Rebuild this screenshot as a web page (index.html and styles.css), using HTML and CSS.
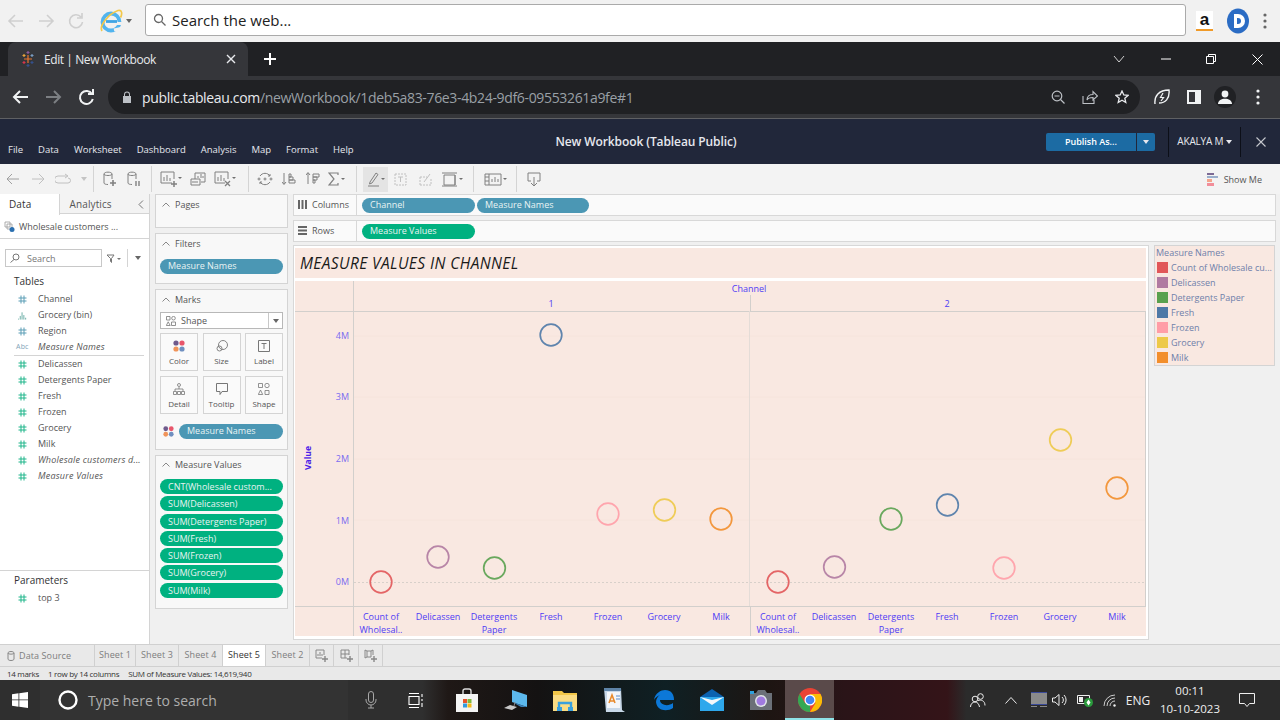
FILE: index.html
```html
<!DOCTYPE html>
<html lang="en">
<head>
    <meta charset="UTF-8">
    <meta name="viewport" content="width=device-width, initial-scale=1.0">
    <title>Edit | New Workbook</title>
    <link rel="stylesheet" href="styles.css">
</head>
<body>
    <svg class="defs" width="0" height="0">
        <symbol id="hash" viewBox="0 0 9 9">
            <path d="M3 .5v8M6 .5v8M.5 3h8M.5 6h8" fill="none" stroke="currentColor" stroke-width="1"/>
        </symbol>
        <symbol id="colors" viewBox="0 0 12 12">
            <circle cx="3" cy="3" r="2.6" fill="#6f5a8c"/><circle cx="9" cy="3" r="2.6" fill="#e8566b"/>
            <circle cx="3" cy="9" r="2.6" fill="#f0945a"/><circle cx="9" cy="9" r="2.6" fill="#6f8fc0"/>
        </symbol>
    </svg>

    <!-- search bar on top of the browser -->
    <div class="top-bar">
        <svg class="nav-faded" width="90" height="20" viewBox="0 0 90 20" fill="none" stroke="#cfcfcf" stroke-width="1.6">
            <path d="M23 10H9M15 4l-6 6 6 6M39 10h14M47 4l6 6-6 6M81 6a6.5 6.5 0 1 0 1.5 5M82 2v5h-5"/>
        </svg>
        <svg class="ie-logo" width="24" height="26" viewBox="0 0 24 26" fill="none">
            <circle cx="12" cy="14" r="8.500" stroke="#52b4ee" stroke-width="3.800"/>
            <path d="M7 13.500h11" stroke="#3fa4e4" stroke-width="2.800"/>
            <path d="M18 15.500h5M15 22l7-1.500" stroke="#f1f1f1" stroke-width="3.200"/>
            <path d="M3 23C0 18 9 6 19 2.500c4-1 4.500 3 2.500 7" stroke="#f2c84a" stroke-width="1.700"/>
        </svg>
        <span class="caret-dark"></span>
        <div class="web-search">
            <svg width="14" height="14" viewBox="0 0 14 14" fill="none" stroke="#666" stroke-width="1.3"><circle cx="5.5" cy="5.5" r="4"/><path d="M8.5 8.5l4 4"/></svg>
            <span>Search the web...</span>
        </div>
        <span class="amazon">a</span>
        <svg class="d-logo" width="24" height="26" viewBox="0 0 24 26">
            <ellipse cx="12" cy="13" rx="11" ry="12.500" fill="#2b6cc4"/>
            <path d="M8 6h4a7 7 0 0 1 0 14H8z" fill="#fff"/><path d="M11 10h1a3 3 0 0 1 0 6h-1z" fill="#2b6cc4"/>
        </svg>
        <svg width="4" height="16" viewBox="0 0 4 16" fill="#666"><circle cx="2" cy="2" r="1.6"/><circle cx="2" cy="8" r="1.6"/><circle cx="2" cy="14" r="1.6"/></svg>
    </div>

    <!-- chrome tabs -->
    <div class="tab-strip">
        <div class="chrome-tab">
            <svg width="14" height="16" viewBox="0 0 14 16" fill="none" stroke-width="1.2">
                <path d="M7 4v8M3 8h8" stroke="#e8762c"/><path d="M3 3v3M1.500 4.500h3" stroke="#e8a33c"/><path d="M11 3v3M9.500 4.500h3" stroke="#7a9cc0"/>
                <path d="M3 10v3M1.500 11.500h3" stroke="#d8344a"/><path d="M11 10v3M9.500 11.500h3" stroke="#34508c"/><path d="M7 0v3M5.500 1.500h3" stroke="#8a5a9c"/><path d="M7 13v3M5.500 14.500h3" stroke="#34508c"/>
            </svg>
            <span class="tab-title">Edit | New Workbook</span>
            <svg class="tab-close" width="10" height="10" viewBox="0 0 10 10" stroke="#e8eaed" stroke-width="1.4"><path d="M1 1l8 8M9 1l-8 8"/></svg>
        </div>
        <svg class="new-tab" width="12" height="12" viewBox="0 0 12 12" stroke="#fff" stroke-width="2"><path d="M6 0v12M0 6h12"/></svg>
        <div class="window-btns">
            <svg width="12" height="8" viewBox="0 0 12 8" fill="none" stroke="#d0d0d0"><path d="M1 1l5 6 5-6"/></svg>
            <svg width="10" height="2" viewBox="0 0 10 2" stroke="#fff"><path d="M0 1h10"/></svg>
            <svg width="10" height="10" viewBox="0 0 10 10" fill="none" stroke="#fff"><path d="M.5 2.500h7v7h-7zM2.500 2.500v-2h7v7h-2"/></svg>
            <svg width="11" height="11" viewBox="0 0 11 11" stroke="#fff"><path d="M.5.5l10 10M10.500.5l-10 10"/></svg>
        </div>
    </div>

    <!-- chrome address row -->
    <div class="address-row">
        <svg class="chrome-nav" width="92" height="18" viewBox="0 0 92 18" fill="none" stroke-width="2">
            <path d="M22 9H8M14 3L8 9l6 6" stroke="#f1f3f4"/>
            <path d="M40 9h14M48 3l6 6-6 6" stroke="#7c7f83"/>
            <path d="M90 6a6.500 6.500 0 1 0 .8 5M91 1v5h-5" stroke="#f1f3f4" transform="translate(-4 0)"/>
        </svg>
        <div class="omnibox">
            <svg width="10" height="12" viewBox="0 0 10 12" fill="#bdc1c6"><path d="M2 5V3.500a3 3 0 0 1 6 0V5h1v7H1V5zM3 5h4V3.500a2 2 0 0 0-4 0z"/></svg>
            <span class="url"><b>public.tableau.com</b>/newWorkbook/1deb5a83-76e3-4b24-9df6-09553261a9fe#1</span>
            <div class="omni-icons">
                <svg width="14" height="14" viewBox="0 0 14 14" fill="none" stroke="#bdc1c6" stroke-width="1.2"><circle cx="6" cy="6" r="4.800"/><path d="M9.500 9.500l4 4M3.500 6h5"/></svg>
                <svg width="16" height="14" viewBox="0 0 16 14" fill="none" stroke="#bdc1c6" stroke-width="1.1"><path d="M1 6v7.500h11V10M5 10c0-4 3-5.500 6-5.500V1.500l4.500 4.500-4.500 4V7.500C8 7.500 6 8 5 10z"/></svg>
                <svg width="14" height="14" viewBox="0 0 14 14" fill="none" stroke="#e8eaed" stroke-width="1.3"><path d="M7 1l1.800 4 4.200.4-3.200 2.800 1 4.300L7 10.300 3.200 12.500l1-4.300L1 5.400 5.200 5z"/></svg>
            </div>
        </div>
        <div class="chrome-actions">
            <svg width="16" height="16" viewBox="0 0 16 16" fill="none" stroke="#f1f3f4" stroke-width="1.400"><path d="M1 15C0 7 5 1 15 1c1 9-4 13-10 13"/><path d="M9 4L6.500 8.500h3L7 12" stroke-width="1.200"/></svg>
            <svg class="panel-ic" width="14" height="14" viewBox="0 0 14 14"><path d="M0 0h14v14H0z" fill="#f1f3f4"/><path d="M2 2h6v10H2z" fill="#35363a"/></svg>
            <span class="avatar"><svg width="14" height="14" viewBox="0 0 14 14" fill="#f1f3f4"><circle cx="7" cy="4" r="3.400"/><path d="M0 14c0-7 14-7 14 0z"/></svg></span>
            <svg class="dots-ic" width="4" height="16" viewBox="0 0 4 16" fill="#f1f3f4"><circle cx="2" cy="2" r="1.600"/><circle cx="2" cy="8" r="1.600"/><circle cx="2" cy="14" r="1.600"/></svg>
        </div>
    </div>

    <!-- tableau header -->
    <header class="tb-header">
        <nav class="menu">
            <span>File</span><span>Data</span><span>Worksheet</span><span>Dashboard</span><span>Analysis</span><span>Map</span><span>Format</span><span>Help</span>
        </nav>
        <div class="wb-title">New Workbook (Tableau Public)</div>
        <div class="header-right">
            <div class="publish"><span class="publish-main">Publish As...</span><span class="publish-arrow"><i class="caret-white"></i></span></div>
            <div class="user">AKALYA M <i class="caret-white"></i></div>
            <svg class="header-close" width="10" height="10" viewBox="0 0 10 10" stroke="#c6c8ce" stroke-width="1.1"><path d="M.5.500l9 9M9.500.500l-9 9"/></svg>
        </div>
    </header>

    <!-- tableau toolbar -->
    <div class="toolbar">
        <div class="tb-group g1">
            <span class="tb-btn"><svg width="14" height="12" viewBox="0 0 14 12" class="ic soft"><path d="M13 6H1M6 1L1 6l5 5"/></svg></span>
            <span class="tb-btn"><svg width="14" height="12" viewBox="0 0 14 12" class="ic off"><path d="M1 6h12M8 1l5 5-5 5"/></svg></span>
            <span class="tb-btn"><svg width="16" height="12" viewBox="0 0 16 12" class="ic off"><path d="M12 3H3a2.500 2.500 0 0 0 0 7h10a2 2 0 0 0 0-5M10 1l3 2-3 2"/></svg></span>
            <i class="caret-grey off"></i>
        </div>
        <div class="tb-group g2">
            <span class="tb-btn"><svg width="16" height="16" viewBox="0 0 16 16" class="ic"><path d="M2 3c0-2.500 8-2.500 8 0v5M2 3c0 2 8 2 8 0M2 3v9c0 1 2 1.500 4 1.500"/><path d="M11 9v6M8 12h6" stroke-width="1.600"/></svg></span>
            <span class="tb-btn"><svg width="16" height="16" viewBox="0 0 16 16" class="ic"><path d="M2 3c0-2.500 8-2.500 8 0v5M2 3c0 2 8 2 8 0M2 3v9c0 1 2 1.500 4 1.500"/><path d="M10 10v5M13 10v5" stroke-width="1.400"/></svg></span>
        </div>
        <div class="tb-group g3">
            <span class="tb-btn"><svg width="22" height="16" viewBox="0 0 22 16" class="ic"><path d="M12 12H1V1h13v7M4 10V6M7 10V4M10 10V7"/><path d="M14 10v6M11 13h6" stroke-width="1.500"/><path d="M18 6h4l-2 2z" class="solid"/></svg></span>
            <span class="tb-btn"><svg width="16" height="16" viewBox="0 0 16 16" class="ic"><path d="M5 8V2h10v9h-4M8 7V5M11 7V3M13 7V5"/><path d="M1 8h9v6H1zM3 12v-2M5 12v-2M7 12v-2"/></svg></span>
            <span class="tb-btn"><svg width="22" height="16" viewBox="0 0 22 16" class="ic"><path d="M11 12H1V1h13v7M4 10V6M7 10V4M10 10V7"/><path d="M11 10l5 5M16 10l-5 5" stroke-width="1.300"/><path d="M18 6h4l-2 2z" class="solid"/></svg></span>
        </div>
        <div class="tb-group g4">
            <span class="tb-btn"><svg width="16" height="16" viewBox="0 0 16 16" class="ic"><path d="M3 5a6 6 0 0 1 10 0M13 11a6 6 0 0 1-10 0M13 3v2h-2M3 13v-2h2"/><circle cx="2" cy="8" r="1"/><circle cx="8" cy="8" r="1"/><circle cx="14" cy="8" r="1"/></svg></span>
            <span class="tb-btn"><svg width="14" height="14" viewBox="0 0 14 14" class="ic"><path d="M2 1v11M0 10l2 2.500L4 10M7 2h2v3H7zM7 5h4v3H7zM7 8h6v3H7z"/></svg></span>
            <span class="tb-btn"><svg width="14" height="14" viewBox="0 0 14 14" class="ic"><path d="M2 12V1M0 3l2-2.500L4 3M7 2h6v3H7zM7 5h4v3H7zM7 8h2v3H7z"/></svg></span>
            <span class="tb-btn"><svg width="18" height="14" viewBox="0 0 18 14" class="ic"><path d="M10 3V1H1l5 6-5 6h9v-2" stroke-width="1.200"/><path d="M13 6h4l-2 2z" class="solid"/></svg></span>
        </div>
        <div class="tb-group g5">
            <span class="tb-btn active"><svg width="18" height="15" viewBox="0 0 18 15" class="ic"><path d="M3 10L9 1l2 1.500-6 8.500-2.500 1zM1 14h11"/><path d="M14 6h4l-2 2z" class="solid"/></svg></span>
            <span class="tb-btn"><svg width="13" height="13" viewBox="0 0 13 13" class="ic off"><path d="M1 1h11v11H1z" stroke-dasharray="2 1"/><path d="M4 4h5M6.500 4v5"/></svg></span>
            <span class="tb-btn"><svg width="13" height="13" viewBox="0 0 13 13" class="ic off"><path d="M1 4h7M1 12h11V6M1 4v8" stroke-dasharray="2 1"/><path d="M5 9l6-8"/></svg></span>
            <span class="tb-btn"><svg width="24" height="15" viewBox="0 0 24 15" class="ic"><path d="M3 3h11v10H3zM1 1h15M1 14h15M14 3v10"/><path d="M18 6h4l-2 2z" class="solid"/></svg></span>
        </div>
        <div class="tb-group g6">
            <span class="tb-btn wide"><svg width="24" height="13" viewBox="0 0 24 13" class="ic"><path d="M1 1h16v11H1zM5 1v11M8 9V6M11 9V4M14 9V6M1 4h4M1 8h4"/><path d="M19 5h4l-2 2z" class="solid"/></svg></span>
        </div>
        <div class="tb-group g7">
            <span class="tb-btn"><svg width="14" height="15" viewBox="0 0 14 15" class="ic"><path d="M4 9H1V1h12v8h-3M7 5v9M4 11l3 3 3-3"/></svg></span>
        </div>
        <div class="show-me">
            <svg width="11" height="13" viewBox="0 0 11 13"><path d="M0 0h7v2H0z" fill="#7c6a94"/><path d="M0 3h11v2H0z" fill="#9aaecb"/><path d="M0 6h5v3H0z" fill="#f4a58c"/><path d="M0 10h7v3H0z" fill="#f28e9a"/></svg>
            <span>Show Me</span>
        </div>
    </div>

    <div class="workspace">
        <!-- data pane -->
        <aside class="data-pane">
            <div class="pane-tabs">
                <span class="pane-tab current">Data</span>
                <span class="pane-tab">Analytics</span>
                <svg class="collapse" width="6" height="9" viewBox="0 0 6 9" fill="none" stroke="#777"><path d="M5 .5l-4 4 4 4"/></svg>
            </div>
            <div class="source">
                <svg width="11" height="11" viewBox="0 0 11 11" fill="none" stroke="#9a9a9a" stroke-width=".8"><path d="M1 1h5v5H1zM3 3h5v5H3z"/><circle cx="8" cy="8.500" r="2.500" fill="#2a6fb0" stroke="none"/></svg>
                <span>Wholesale customers ...</span>
            </div>
            <div class="search-row">
                <div class="field-search">
                    <svg width="10" height="10" viewBox="0 0 10 10" fill="none" stroke="#777"><circle cx="6" cy="4" r="3"/><path d="M4 6.500L.5 9.500"/></svg>
                    <span>Search</span>
                </div>
                <svg width="16" height="9" viewBox="0 0 16 9" fill="none" stroke="#777"><path d="M1 1h7L5.500 4.500v4l-1-1v-3z"/><path d="M11 4h4l-2 2z" fill="#777" stroke="none"/></svg>
                <span class="search-sep"></span>
                <i class="caret-grey"></i>
            </div>
            <div class="section-title tables-title">Tables</div>
            <ul class="fields">
                <li><svg class="hash dim"><use href="#hash"/></svg>Channel</li>
                <li><svg class="hash" width="10" height="9" viewBox="0 0 10 9"><path d="M.5 9V8M2.500 9V5M4.500 9V1M6.500 9V4M8.500 9V7" stroke="#62a9a0"/></svg>Grocery (bin)</li>
                <li><svg class="hash dim"><use href="#hash"/></svg>Region</li>
                <li class="gen"><span class="abc">Abc</span>Measure Names</li>
                <li class="rule"></li>
                <li><svg class="hash green"><use href="#hash"/></svg>Delicassen</li>
                <li><svg class="hash green"><use href="#hash"/></svg>Detergents Paper</li>
                <li><svg class="hash green"><use href="#hash"/></svg>Fresh</li>
                <li><svg class="hash green"><use href="#hash"/></svg>Frozen</li>
                <li><svg class="hash green"><use href="#hash"/></svg>Grocery</li>
                <li><svg class="hash green"><use href="#hash"/></svg>Milk</li>
                <li class="gen"><svg class="hash green"><use href="#hash"/></svg>Wholesale customers d...</li>
                <li class="gen"><svg class="hash green"><use href="#hash"/></svg>Measure Values</li>
            </ul>
            <div class="params">
                <div class="section-title">Parameters</div>
                <ul class="fields">
                    <li><svg class="hash green"><use href="#hash"/></svg>top 3</li>
                </ul>
            </div>
        </aside>

        <!-- cards -->
        <section class="cards">
            <div class="card pages-card">
                <div class="card-title"><svg class="chev" width="8" height="5" viewBox="0 0 8 5" fill="none" stroke="#888"><path d="M.5 4.500L4 1l3.500 3.500"/></svg>Pages</div>
            </div>
            <div class="card filters-card">
                <div class="card-title"><svg class="chev" width="8" height="5" viewBox="0 0 8 5" fill="none" stroke="#888"><path d="M.5 4.500L4 1l3.500 3.500"/></svg>Filters</div>
                <div class="pill blue">Measure Names</div>
            </div>
            <div class="card marks-card">
                <div class="card-title"><svg class="chev" width="8" height="5" viewBox="0 0 8 5" fill="none" stroke="#888"><path d="M.5 4.500L4 1l3.500 3.500"/></svg>Marks</div>
                <div class="mark-select">
                    <svg width="10" height="10" viewBox="0 0 10 10" fill="none" stroke="#777" stroke-width=".8"><path d="M.5.500h3.500v3.500H.5z"/><circle cx="7.500" cy="2.200" r="1.800"/><path d="M2.200 5.800l2 3.700H.3z"/><path d="M5.500 6h4v3.500h-4z"/></svg>
                    <span>Shape</span>
                    <span class="select-arrow"><i class="caret-grey"></i></span>
                </div>
                <div class="mark-grid">
                    <div class="mark-btn"><svg width="12" height="12"><use href="#colors"/></svg>Color</div>
                    <div class="mark-btn"><svg width="12" height="12" viewBox="0 0 12 12" fill="none" stroke="#777" stroke-width=".9"><circle cx="7" cy="5" r="4.500"/><circle cx="3.500" cy="8.500" r="2.500"/></svg>Size</div>
                    <div class="mark-btn"><svg width="12" height="12" viewBox="0 0 12 12" fill="none" stroke="#777"><path d="M.5.500h11v11H.5zM3.500 3.500h5M6 3.500V9"/></svg>Label</div>
                    <div class="mark-btn"><svg width="12" height="12" viewBox="0 0 12 12" fill="none" stroke="#777" stroke-width=".8"><circle cx="6" cy="2" r="1.500"/><path d="M6 4v2M2 8V6h8v2"/><path d="M.5 8.500h3v3h-3zM4.500 8.500h3v3h-3zM8.500 8.500h3v3h-3z"/></svg>Detail</div>
                    <div class="mark-btn"><svg width="12" height="12" viewBox="0 0 12 12" fill="none" stroke="#777"><path d="M.5.500h11v8H6l-2 3v-3H.5z"/></svg>Tooltip</div>
                    <div class="mark-btn"><svg width="12" height="12" viewBox="0 0 12 12" fill="none" stroke="#777" stroke-width=".8"><path d="M.5.500h4v4h-4z"/><circle cx="9" cy="2.500" r="2.200"/><path d="M2.500 7l2.200 4.500H.3z"/><path d="M7 7.500h4v4H7z"/></svg>Shape</div>
                </div>
                <div class="mark-pill">
                    <svg width="11" height="11"><use href="#colors"/></svg>
                    <div class="pill blue">Measure Names</div>
                </div>
            </div>
            <div class="card values-card">
                <div class="card-title"><svg class="chev" width="8" height="5" viewBox="0 0 8 5" fill="none" stroke="#888"><path d="M.5 4.500L4 1l3.500 3.500"/></svg>Measure Values</div>
                <div class="pill green">CNT(Wholesale custom...</div>
                <div class="pill green">SUM(Delicassen)</div>
                <div class="pill green">SUM(Detergents Paper)</div>
                <div class="pill green">SUM(Fresh)</div>
                <div class="pill green">SUM(Frozen)</div>
                <div class="pill green">SUM(Grocery)</div>
                <div class="pill green">SUM(Milk)</div>
            </div>
        </section>

        <!-- shelves and view -->
        <main class="sheet">
            <div class="shelf">
                <div class="shelf-label">
                    <svg width="9" height="9" viewBox="0 0 9 9" fill="#666"><path d="M0 0h2v9H0zM3.500 0h2v9h-2zM7 0h2v9H7z"/></svg>
                    Columns
                </div>
                <div class="pill blue shelf-pill">Channel</div>
                <div class="pill blue shelf-pill">Measure Names</div>
            </div>
            <div class="shelf">
                <div class="shelf-label">
                    <svg width="9" height="9" viewBox="0 0 9 9" fill="#666"><path d="M0 0h9v2H0zM0 3.500h9v2H0zM0 7h9v2H0z"/></svg>
                    Rows
                </div>
                <div class="pill green shelf-pill">Measure Values</div>
            </div>
            <div class="view-area">
                <div class="viz">
                    <div class="viz-title">MEASURE VALUES IN CHANNEL</div>
                    <svg class="chart" width="851" height="355" viewBox="295 281 851 355">
                        <!-- grid -->
                        <g stroke="#f6e4dc" fill="none">
                            <path d="M354 336H1146M354 397H1146M354 459H1146M354 520H1146"/>
                        </g>
                        <path d="M354 582.500H1146" stroke="#d8d0ca" stroke-dasharray="2 2" fill="none"/>
                        <g stroke="#d2cfcc" fill="none">
                            <path d="M353.500 281V636M295 311.500H1146M295 606.500H1146M1145.500 311V606"/>
                            <path d="M750.500 295V311M750.500 606V636"/>
                        </g>
                        <path d="M749.500 311V606" stroke="#e4dcd7" fill="none"/>
                        <g class="chart-text">
                            <text x="749" y="292" text-anchor="middle">Channel</text>
                            <text x="551" y="307" text-anchor="middle">1</text>
                            <text x="947" y="307" text-anchor="middle">2</text>
                            <g text-anchor="end" class="y-ticks">
                                <text x="349" y="339">4M</text>
                                <text x="349" y="400">3M</text>
                                <text x="349" y="462">2M</text>
                                <text x="349" y="524">1M</text>
                                <text x="349" y="585">0M</text>
                            </g>
                            <text class="axis-name" transform="translate(311 458) rotate(-90)" text-anchor="middle">Value</text>
                            <g text-anchor="middle">
                                <text x="381" y="620">Count of</text><text x="381" y="633">Wholesal..</text>
                                <text x="438" y="620">Delicassen</text>
                                <text x="494" y="620">Detergents</text><text x="494" y="633">Paper</text>
                                <text x="551" y="620">Fresh</text>
                                <text x="608" y="620">Frozen</text>
                                <text x="664" y="620">Grocery</text>
                                <text x="721" y="620">Milk</text>
                                <text x="778" y="620">Count of</text><text x="778" y="633">Wholesal..</text>
                                <text x="834" y="620">Delicassen</text>
                                <text x="891" y="620">Detergents</text><text x="891" y="633">Paper</text>
                                <text x="947" y="620">Fresh</text>
                                <text x="1004" y="620">Frozen</text>
                                <text x="1060" y="620">Grocery</text>
                                <text x="1117" y="620">Milk</text>
                            </g>
                        </g>
                        <g fill="none" stroke-width="1.700" stroke-opacity=".9">
                            <circle cx="381" cy="582" r="10.800" stroke="#e15759"/>
                            <circle cx="438" cy="557" r="10.800" stroke="#b07aa1"/>
                            <circle cx="494.500" cy="568" r="10.800" stroke="#59a14f"/>
                            <circle cx="551" cy="335" r="10.800" stroke="#4e79a7"/>
                            <circle cx="608" cy="514" r="10.800" stroke="#ff9da7"/>
                            <circle cx="664.500" cy="510" r="10.800" stroke="#edc948"/>
                            <circle cx="721" cy="519" r="10.800" stroke="#f28e2b"/>
                            <circle cx="778" cy="582" r="10.800" stroke="#e15759"/>
                            <circle cx="834.500" cy="567" r="10.800" stroke="#b07aa1"/>
                            <circle cx="891" cy="519" r="10.800" stroke="#59a14f"/>
                            <circle cx="947.500" cy="505" r="10.800" stroke="#4e79a7"/>
                            <circle cx="1004" cy="568" r="10.800" stroke="#ff9da7"/>
                            <circle cx="1060.500" cy="440" r="10.800" stroke="#edc948"/>
                            <circle cx="1117" cy="488" r="10.800" stroke="#f28e2b"/>
                        </g>
                    </svg>
                </div>
                <div class="legend">
                    <div class="legend-title">Measure Names</div>
                    <div class="legend-item"><span class="swatch s-red"></span>Count of Wholesale cu...</div>
                    <div class="legend-item"><span class="swatch s-mauve"></span>Delicassen</div>
                    <div class="legend-item"><span class="swatch s-green"></span>Detergents Paper</div>
                    <div class="legend-item"><span class="swatch s-blue"></span>Fresh</div>
                    <div class="legend-item"><span class="swatch s-pink"></span>Frozen</div>
                    <div class="legend-item"><span class="swatch s-yellow"></span>Grocery</div>
                    <div class="legend-item"><span class="swatch s-orange"></span>Milk</div>
                </div>
            </div>
        </main>
    </div>

    <!-- sheet tabs -->
    <div class="sheet-tabs">
        <div class="sheet-tab source-tab">
            <svg width="8" height="10" viewBox="0 0 8 10" fill="none" stroke="#888"><path d="M1 2c0-2 6-2 6 0v6c0 2-6 2-6 0zM1 2c0 1.500 6 1.500 6 0"/></svg>
            Data Source
        </div>
        <div class="sheet-tab t1">Sheet 1</div>
        <div class="sheet-tab t2">Sheet 3</div>
        <div class="sheet-tab t4">Sheet 4</div>
        <div class="sheet-tab t2 current">Sheet 5</div>
        <div class="sheet-tab t4">Sheet 2</div>
        <div class="sheet-tab t3"><svg width="13" height="13" viewBox="0 0 13 13" fill="none" stroke="#888"><path d="M7 9H1V1h8v5M3 7V5M5 7V3M7 7V5"/><path d="M10 7v6M7 10h6" stroke-width="1.400"/></svg></div>
        <div class="sheet-tab t5"><svg width="13" height="13" viewBox="0 0 13 13" fill="none" stroke="#888"><path d="M7 9H1V1h8v5M1 5h8M5 1v8"/><path d="M10 7v6M7 10h6" stroke-width="1.400"/></svg></div>
        <div class="sheet-tab t3"><svg width="13" height="13" viewBox="0 0 13 13" fill="none" stroke="#888"><path d="M1 1l2 1h4l2-1v5M1 1v8l2-1h4M3 2v6M7 2v6"/><path d="M10 7v6M7 10h6" stroke-width="1.400"/></svg></div>
    </div>
    <div class="status-bar">
        <span>14 marks</span><span>1 row by 14 columns</span><span>SUM of Measure Values: 14,619,940</span>
    </div>

    <!-- windows taskbar -->
    <footer class="taskbar">
        <div class="start">
            <svg width="16" height="16" viewBox="0 0 16 16" fill="#fff"><path d="M0 2.300l6.500-1V7.500H0zM7.300 1.200L16 0v7.500H7.300zM0 8.300h6.500v6.400l-6.500-1zM7.300 8.300H16V16l-8.700-1.200z"/></svg>
        </div>
        <div class="task-search">
            <svg width="20" height="20" viewBox="0 0 20 20" fill="none" stroke="#fff" stroke-width="2.400"><circle cx="10" cy="10" r="8.500"/></svg>
            <span>Type here to search</span>
        </div>
        <div class="slot mic"><svg width="12" height="18" viewBox="0 0 12 18" fill="none" stroke="#a8a8a8"><rect x="3.500" y=".5" width="5" height="11" rx="2.500"/><path d="M1 8v1a5 5 0 0 0 10 0V8M6 14v3M3 17h6"/></svg></div>
        <div class="slot view"><svg width="16" height="15" viewBox="0 0 16 15" fill="none" stroke="#fff"><path d="M1 3.500h10v8H1zM1 .5h10M1 14.500h10M14 1v3M14 6v2M14 10v4" stroke-width="1.100"/></svg></div>
        <div class="slot app first-app"><svg width="24" height="24" viewBox="0 0 24 24"><path d="M8 6V3a2 2 0 0 1 2-2h4a2 2 0 0 1 2 2v3" fill="none" stroke="#ddd" stroke-width="1.400"/><path d="M1 6h22v18H1z" fill="#f4f4f4"/><path d="M8 11h4v4H8z" fill="#e8542c"/><path d="M12.500 11h4v4h-4z" fill="#7db83c"/><path d="M8 15.500h4v4H8z" fill="#2f9ae0"/><path d="M12.500 15.500h4v4h-4z" fill="#f4b818"/></svg></div>
        <div class="slot app"><svg width="24" height="24" viewBox="0 0 24 24"><path d="M8 2l15 5v12L8 14z" fill="#5cb8ec"/><path d="M8 14l15 5-6 0-7-4z" fill="#3a80b8"/><path d="M0 20l6-3 7 2-5 3z" fill="#c8c8c8"/><path d="M11 14l-1 4" stroke="#888"/></svg></div>
        <div class="slot app"><svg width="24" height="22" viewBox="0 0 24 22"><path d="M0 2h9l2 2h13v6H0z" fill="#f2c648"/><path d="M0 6h24v16H0z" fill="#fbdc83"/><path d="M6 18v-4h12v4" fill="none" stroke="#3aa0dc" stroke-width="2.400"/><path d="M4 18h5v4H4zM15 18h5v4h-5z" fill="#3aa0dc"/></svg></div>
        <div class="slot app"><svg width="22" height="24" viewBox="0 0 22 24"><path d="M1 0h17l1 22 3 2H3z" fill="#c8d8e8"/><path d="M1 0h17v3H1z" fill="#5f84a8"/><path d="M4 4h13v16H4z" fill="#f4f6f9"/><path d="M6 15l3-8 3 8M7 13h4" fill="none" stroke="#e88a2c" stroke-width="1.600"/><path d="M13 8h4M13 11h4" stroke="#5a8cc8"/></svg></div>
        <div class="slot app"><svg width="24" height="24" viewBox="0 0 24 24" fill="none"><path d="M3 12C4 5 10 2 14 2c6 0 9 4 9 10H9c0 5 8 7 13 3v5c-6 4-16 3-17-6 0-3 2-6 4-7-3 1-5 3-6 5z" fill="#0c78d8"/></svg></div>
        <div class="slot app"><svg width="24" height="22" viewBox="0 0 24 22"><path d="M12 0l12 8v1H0V8z" fill="#0c62b0"/><path d="M0 8h24v14H0z" fill="#2ea8ec"/><path d="M0 8l12 8 12-8-12 3z" fill="#f4f8fb"/></svg></div>
        <div class="slot app"><svg width="24" height="20" viewBox="0 0 24 20"><path d="M1 3h6l2-3h7l2 3h5v17H1z" fill="#6b7078"/><path d="M1 1h4v3H1z" fill="#2ea0dc"/><circle cx="12" cy="11" r="6" fill="#e0e4e8"/><circle cx="12" cy="11" r="4.500" fill="#a07ae0"/></svg></div>
        <div class="slot app running"><svg width="24" height="24" viewBox="0 0 24 24"><circle cx="12" cy="12" r="12" fill="#ea4335"/><path d="M12 24A12 12 0 0 1 1.600 6L7 15l5 2z" fill="#34a853"/><path d="M12 6h10.500A12 12 0 0 1 12 24l5.500-9z" fill="#fbbc05"/><circle cx="12" cy="12" r="5.500" fill="#fff"/><circle cx="12" cy="12" r="4.300" fill="#4285f4"/></svg></div>
        <div class="tray">
            <span class="tray-slot people"><svg width="16" height="14" viewBox="0 0 16 14" fill="none" stroke="#eee"><circle cx="5" cy="6" r="2.800"/><path d="M.5 14c0-3 2-5 4.500-5s4 2 4.500 5"/><circle cx="10.500" cy="3.500" r="2.800"/><path d="M8 7.500c3-1 7 0 7 5"/></svg></span>
            <span class="tray-slot caret-up"><svg width="12" height="7" viewBox="0 0 12 7" fill="none" stroke="#eee"><path d="M.5 6.500l5.500-6 5.500 6"/></svg></span>
            <span class="tray-slot laptop"><svg width="16" height="16" viewBox="0 0 16 16"><path d="M0 0h16v12H0z" fill="#8a8a8a"/><path d="M0 0h16v1H0zM0 12h16v1H0z" fill="#3a4a9a"/><path d="M0 14h6v1H0zM9 14h7v1H9z" fill="#8a8a8a"/></svg></span>
            <span class="tray-slot"><svg width="16" height="14" viewBox="0 0 16 14" fill="none" stroke="#eee"><path d="M.5 5h2.500L7 1.500v11L3 9H.5zM10 4a4 4 0 0 1 0 6M12 2a7 7 0 0 1 0 10"/></svg></span>
            <span class="tray-slot"><svg width="16" height="14" viewBox="0 0 16 14"><path d="M.5 2.500h12v8H.5z" fill="none" stroke="#eee"/><path d="M2 4h4v5H2z" fill="#eee"/><circle cx="11.500" cy="9.500" r="4.500" fill="#2a9a3c"/><path d="M11.500 6.500l2 3-2 3-2-3z" fill="#fff"/></svg></span>
            <span class="tray-slot"><svg width="14" height="13" viewBox="0 0 14 13" fill="none" stroke="#ccc"><path d="M1 12A11 11 0 0 1 12 1M4 12a8 8 0 0 1 8-8M7 12a5 5 0 0 1 5-5"/><circle cx="11.500" cy="11.500" r="1.200" fill="#eee" stroke="none"/></svg></span>
            <span class="tray-slot eng">ENG</span>
            <span class="tray-slot clock"><span>00:11</span><span>10-10-2023</span></span>
            <span class="tray-slot notify"><svg width="16" height="14" viewBox="0 0 16 14" fill="none" stroke="#eee"><path d="M.5.500h15v10h-5l-2.500 3-2.500-3h-5z"/></svg></span>
        </div>
    </footer>
</body>
</html>
```

FILE: styles.css
```css
* {
    box-sizing: border-box;
}
html, body {
    margin: 0;
    height: 720px;
    overflow: hidden;
}
body {
    width: 1280px;
    font-family: "Open Sans", Arial, sans-serif;
    font-size: 9px;
    color: #555;
    background: #f0f0f0;
}
svg {
    display: block;
    flex: none;
}
.defs {
    position: absolute;
}
ul {
    list-style: none;
    margin: 0;
    padding: 0;
}

/* top search bar */
.top-bar {
    height: 42px;
    background: #f1f1f1;
    display: flex;
    align-items: center;
    padding-left: 0;
}
.nav-faded {
    margin-right: 9px;
}
.caret-dark {
    width: 0;
    height: 0;
    border: 3px solid transparent;
    border-top: 4px solid #666;
    border-bottom: 0;
    margin: 0 13px 0 3px;
}
.web-search {
    width: 1041px;
    height: 32px;
    margin-bottom: 2px;
    background: #fff;
    border: 1px solid #aaa;
    border-radius: 3px;
    display: flex;
    align-items: center;
    gap: 5px;
    padding-left: 7px;
    font-size: 15px;
    color: #222;
}
.amazon {
    width: 17px;
    height: 20px;
    margin: 0 13px 0 10px;
    background: #fff;
    font: bold 17px/18px "Liberation Sans", sans-serif;
    color: #111;
    text-align: center;
    border-bottom: 2px solid #f09a28;
}
.d-logo {
    margin-right: 13px;
}

/* chrome */
.tab-strip {
    height: 34px;
    background: #202124;
    display: flex;
    align-items: flex-end;
}
.chrome-tab {
    width: 240px;
    height: 34px;
    margin-left: 8px;
    background: #35363a;
    border-radius: 8px 8px 0 0;
    display: flex;
    align-items: center;
    padding: 0 12px 0 13px;
    color: #e8eaed;
    font-size: 12px;
}
.tab-title {
    margin-left: 9px;
    flex: 1;
    letter-spacing: -0.42px;
}
.new-tab {
    margin: 0 0 11px 16px;
}
.window-btns {
    margin-left: auto;
    height: 34px;
    display: flex;
    align-items: center;
    width: 167px;
    justify-content: space-between;
    padding: 0 17px 0 0;
}
.address-row {
    height: 43px;
    background: #35363a;
    border-bottom: 1px solid #5f6063;
    display: flex;
    align-items: center;
}
.chrome-nav {
    margin-left: 6px;
    margin-right: 10px;
}
.omnibox {
    width: 1032px;
    height: 34px;
    border-radius: 17px;
    background: #202124;
    display: flex;
    align-items: center;
    padding-left: 14px;
}
.url {
    margin-left: 10px;
    font-size: 14px;
    color: #9aa0a6;
    letter-spacing: -0.34px;
}
.url b {
    font-weight: 400;
    color: #e8eaed;
}
.omni-icons {
    margin-left: auto;
    display: flex;
    align-items: center;
    gap: 17px;
    padding-right: 11px;
}
.chrome-actions {
    flex: 1;
    display: flex;
    align-items: center;
    padding-left: 14px;
    gap: 15px;
}
.panel-ic {
    margin-left: 2px;
}
.avatar {
    width: 22px;
    height: 22px;
    margin-left: -2px;
    border-radius: 50%;
    background: #202124;
    display: flex;
    align-items: center;
    justify-content: center;
}
.dots-ic {
    margin-left: 5px;
}

/* tableau header */
.tb-header {
    height: 45px;
    background: #21273a;
    display: flex;
    color: #e6e8ee;
}
.menu {
    width: 555px;
    align-self: flex-end;
    display: flex;
    gap: 15px;
    padding: 0 0 7px 8px;
    font-size: 9.500px;
    line-height: 14px;
}
.wb-title {
    width: 182px;
    padding-top: 14px;
    font-size: 12px;
    font-weight: 600;
    letter-spacing: -0.1px;
    white-space: nowrap;
    text-align: center;
}
.header-right {
    margin-left: auto;
    display: flex;
    align-items: center;
}
.publish {
    display: flex;
    height: 18px;
    border-radius: 2px;
    overflow: hidden;
    background: #1c6ba3;
    color: #fff;
    font-size: 9px;
    font-weight: 600;
}
.publish-main {
    width: 90px;
    line-height: 18px;
    text-align: center;
}
.publish-arrow {
    width: 19px;
    border-left: 1px solid #21273a;
    display: flex;
    align-items: center;
    justify-content: center;
}
.caret-white {
    display: inline-block;
    width: 0;
    height: 0;
    border: 3px solid transparent;
    border-top: 4px solid #e6e8ee;
    border-bottom: 0;
    vertical-align: middle;
}
.user {
    width: 73px;
    height: 30px;
    margin-left: 13px;
    border-left: 1px solid #0c0f18;
    border-right: 1px solid #0c0f18;
    line-height: 29px;
    text-align: center;
    font-size: 10px;
    letter-spacing: -0.2px;
    white-space: nowrap;
}
.header-close {
    margin: 0 14px 0 15px;
}

/* tableau toolbar */
.toolbar {
    height: 30px;
    background: #f3f3f3;
    display: flex;
    align-items: center;
}
.tb-group {
    height: 26px;
    display: flex;
    align-items: center;
    border-right: 1px solid #d4d4d4;
}
.g1 { width: 94px; }
.g2 { width: 58px; padding-left: 4px; }
.g3 { width: 97px; padding-left: 5px; }
.g4 { width: 108px; padding-left: 4px; }
.g5 { width: 117px; padding-left: 6px; }
.g6 { width: 43px; padding-left: 5px; }
.g7 { border-right: 0; padding-left: 5px; }
.g3 .tb-btn { width: 27px; }
.g5 .tb-btn { width: 25px; }
.g5 .tb-btn:last-child { width: 29px; }
.tb-btn {
    width: 24px;
    height: 25px;
    display: flex;
    align-items: center;
    justify-content: center;
}
.g1 .tb-btn { width: 25px; }
.tb-btn.wide { width: 33px; }
.tb-btn.active {
    background: #e4e4e4;
}
.ic {
    fill: none;
    stroke: #808080;
}
.ic.soft {
    stroke: #a0a0a0;
}
.ic.off {
    stroke: #c0c0c0;
}
.ic .solid {
    fill: #707070;
    stroke: none;
}
.caret-grey {
    display: inline-block;
    width: 0;
    height: 0;
    border: 3px solid transparent;
    border-top: 4px solid #666;
    border-bottom: 0;
    flex: none;
}
.caret-grey.off {
    border-top-color: #c4c4c4;
    margin-left: 6px;
}
.show-me {
    margin-left: auto;
    margin-right: 18px;
    display: flex;
    align-items: center;
    gap: 6px;
}

/* main area */
.workspace {
    height: 450px;
    display: flex;
}
.data-pane {
    width: 150px;
    background: #fff;
    border-right: 1px solid #d4d4d4;
    display: flex;
    flex-direction: column;
}
.pane-tabs {
    height: 20px;
    display: flex;
    align-items: flex-start;
    background: #f3f3f3;
    border-bottom: 1px solid #d4d4d4;
    position: relative;
    font-size: 10px;
}
.pane-tab {
    height: 20px;
    line-height: 21px;
    padding-left: 10px;
    width: 90px;
    letter-spacing: 0.1px;
}
.pane-tab.current {
    width: 60px;
    padding-left: 9px;
    background: #fff;
    border-right: 1px solid #d4d4d4;
    height: 21px;
    color: #333;
}
.collapse {
    position: absolute;
    right: 5px;
    top: 6px;
}
.source {
    height: 25px;
    display: flex;
    align-items: center;
    gap: 4px;
    padding-left: 4px;
    border-bottom: 1px solid #d4d4d4;
    font-size: 9px;
}
.search-row {
    display: flex;
    align-items: center;
    margin: 10px 0 0 5px;
    height: 18px;
}
.field-search {
    width: 97px;
    height: 18px;
    border: 1px solid #c8c8c8;
    display: flex;
    align-items: center;
    gap: 7px;
    padding-left: 4px;
    margin-right: 4px;
    color: #777;
}
.search-sep {
    width: 1px;
    height: 18px;
    background: #d4d4d4;
    margin: 0 7px 0 5px;
}
.section-title {
    margin: 8px 0 2px 14px;
    font-size: 10px;
    line-height: 14px;
    color: #333;
}
.tables-title {
    margin: 7px 0 3px 14px;
}
.fields li {
    height: 16px;
    display: flex;
    align-items: center;
    padding-left: 18px;
    white-space: nowrap;
    font-size: 9px;
    line-height: 16px;
}
.fields li.gen {
    font-style: italic;
    letter-spacing: 0.2px;
}
.fields li.rule {
    height: 1px;
    margin: 0 5px 0 14px;
    background: #d4d4d4;
    padding: 0;
}
.hash {
    width: 9px;
    height: 9px;
    margin-right: 11px;
}
.hash.dim {
    color: #5b9db5;
}
.hash.green {
    color: #1fb58a;
}
.abc {
    width: 20px;
    margin-left: -2px;
    margin-right: 2px;
    font-style: normal;
    font-size: 7px;
    color: #7fa4b8;
}
.params {
    margin-top: auto;
    height: 74px;
    border-top: 1px solid #d4d4d4;
}
.params .section-title {
    margin: 2px 0 3px 14px;
}

/* cards */
.cards {
    width: 142px;
    padding: 0 4px 0 5px;
    display: flex;
    flex-direction: column;
    gap: 5px;
    background: #f0f0f0;
}
.card {
    background: #f8f8f8;
    border: 1px solid #d4d4d4;
    padding: 0 4px;
}
.card-title {
    height: 19px;
    display: flex;
    align-items: center;
    gap: 5px;
    padding-left: 2px;
    font-size: 9px;
}
.pages-card { height: 34px; }
.filters-card { height: 51px; }
.marks-card { height: 161px; }
.values-card { height: 154px; }
.filters-card .pill { margin-top: 6px; }
.pill {
    height: 15px;
    border-radius: 8px;
    line-height: 14px;
    padding-left: 8px;
    color: #e9f3f3;
    font-size: 9px;
    white-space: nowrap;
    overflow: hidden;
}
.pill.blue {
    background: #4b97b4;
}
.pill.green {
    background: #00b180;
}
.mark-select {
    height: 17px;
    margin-top: 3px;
    background: #fff;
    border: 1px solid #b8b8b8;
    display: flex;
    align-items: center;
    gap: 5px;
    padding-left: 5px;
}
.select-arrow {
    margin-left: auto;
    width: 14px;
    height: 15px;
    border-left: 1px solid #c8c8c8;
    display: flex;
    align-items: center;
    justify-content: center;
}
.mark-grid {
    margin-top: 4px;
    display: grid;
    grid-template-columns: 38px 38px 38px;
    grid-auto-rows: 38px;
    gap: 5px 4.500px;
}
.mark-btn {
    border: 1px solid #d4d4d4;
    background: #fafafa;
    display: flex;
    flex-direction: column;
    align-items: center;
    justify-content: center;
    gap: 3px;
    font-size: 8px;
    padding-top: 1px;
}
.mark-pill {
    margin-top: 10px;
    display: flex;
    align-items: center;
    gap: 5px;
    padding-left: 3px;
}
.mark-pill .pill {
    flex: 1;
}
.values-card .card-title {
    height: 17px;
    margin-bottom: 6px;
}
.values-card .pill {
    margin-bottom: 2px;
    line-height: 15px;
}
.values-card .pill:nth-child(3),
.values-card .pill:nth-child(7) {
    margin-bottom: 3px;
}

/* shelves and view */
.sheet {
    flex: 1;
    padding: 0 4px 0 1px;
    display: flex;
    flex-direction: column;
}
.shelf {
    height: 22px;
    margin-bottom: 4px;
    background: #fafafa;
    border: 1px solid #d8d8d8;
    display: flex;
    align-items: center;
    gap: 2px;
}
.shelf + .shelf {
    margin-bottom: 3px;
}
.shelf-label {
    width: 63px;
    height: 20px;
    margin-right: 3px;
    border-right: 1px solid #d8d8d8;
    display: flex;
    align-items: center;
    gap: 5px;
    padding: 0 0 2px 4px;
}
.shelf-pill {
    line-height: 14px;
}
.shelf-pill:nth-child(2) {
    width: 113px;
}
.shelf-pill:nth-child(3) {
    width: 112px;
}
.view-area {
    display: flex;
    align-items: flex-start;
}
.viz {
    width: 856px;
    height: 395px;
    background: #fff;
    border: 1px solid #d8d8d8;
    padding: 2px 2px 0 1px;
}
.viz-title {
    height: 30px;
    margin-bottom: 3px;
    background: #f9e8e1;
    padding-left: 5px;
    font-size: 15.500px;
    letter-spacing: 0.4px;
    line-height: 31px;
    font-style: italic;
    color: #1a1a1a;
}
.chart {
    background: #f9e8e1;
}
.chart-text text {
    font-family: "Open Sans", Arial, sans-serif;
    font-size: 9px;
    fill: #4f3cf5;
}
.y-ticks text {
    fill: #7a6cf0;
}
.chart-text .axis-name {
    font-weight: 700;
    font-size: 8.500px;
    fill: #4a20e8;
}
.legend {
    width: 121px;
    height: 121px;
    margin-left: 5px;
    background: #f9e8e1;
    border: 1px solid #d4d4d4;
    padding-left: 1px;
    color: #6f80aa;
    font-size: 9px;
}
.legend-title {
    height: 14px;
    line-height: 14px;
}
.legend-item {
    height: 15px;
    display: flex;
    align-items: center;
    gap: 3px;
    padding-left: 1px;
    white-space: nowrap;
    overflow: hidden;
}
.swatch {
    width: 11px;
    height: 11px;
    flex: none;
}
.s-red { background: #e15759; }
.s-mauve { background: #b07aa1; }
.s-green { background: #59a14f; }
.s-blue { background: #4e79a7; }
.s-pink { background: #ff9da7; }
.s-yellow { background: #edc948; }
.s-orange { background: #f28e2b; }

/* bottom tabs */
.sheet-tabs {
    height: 23px;
    background: #e9e9e9;
    border-top: 1px solid #d0d0d0;
    border-bottom: 1px solid #d0d0d0;
    display: flex;
}
.sheet-tab {
    height: 21px;
    line-height: 20px;
    border-right: 1px solid #d0d0d0;
    text-align: center;
    color: #7d7d7d;
    white-space: nowrap;
    letter-spacing: 0.1px;
}
.source-tab {
    width: 95px;
    display: flex;
    align-items: center;
    gap: 4px;
    padding-left: 7px;
}
.t1 { width: 41px; }
.t2 { width: 43px; }
.t4 { width: 44px; }
.t3, .t5 {
    display: flex;
    align-items: center;
    justify-content: center;
}
.t3 { width: 24px; }
.t5 { width: 25px; }
.sheet-tab.current {
    background: #fff;
    color: #333;
}
.status-bar {
    height: 13px;
    background: #e9e9e9;
    padding-left: 7px;
    display: flex;
    gap: 9px;
    font-size: 8px;
    line-height: 13px;
    letter-spacing: -0.3px;
    color: #333;
}

/* windows taskbar */
.taskbar {
    height: 40px;
    display: flex;
    align-items: center;
    background: linear-gradient(90deg, #2f2f2f 0, #2f2f2f 33%, #1f1816 35%, #141212 42%, #0f2024 52%, #1d1512 60%, #2a1418 66%, #341418 74%, #2b2b2b 75.500%, #2b2b2b 100%);
}
.start {
    width: 40px;
    display: flex;
    justify-content: center;
    padding-right: 0;
}
.task-search {
    width: 308px;
    height: 40px;
    display: flex;
    align-items: center;
    gap: 10px;
    padding-left: 18px;
    background: #333;
    font-size: 14px;
    color: #aeaeae;
}
.slot {
    height: 40px;
    display: flex;
    align-items: center;
    justify-content: center;
}
.mic { width: 46px; }
.view { width: 44px; }
.app { width: 49px; }
.first-app { margin-left: 4px; }
.app.running {
    background: #5a4a4a;
    border-bottom: 2px solid #8fe3e8;
    padding-top: 2px;
}
.tray {
    margin-left: auto;
    padding-right: 12px;
    display: flex;
    align-items: center;
    color: #eee;
}
.tray-slot {
    width: 24px;
    display: flex;
    justify-content: center;
}
.people { width: 28px; }
.caret-up { width: 37px; }
.laptop { width: 19px; }
.tray-slot:nth-child(5) { width: 26px; }
.eng {
    width: 32px;
    font-size: 12px;
}
.clock {
    width: 72px;
    flex-direction: column;
    align-items: center;
    font-size: 11.500px;
    line-height: 18px;
}
.notify { width: 42px; }
```
